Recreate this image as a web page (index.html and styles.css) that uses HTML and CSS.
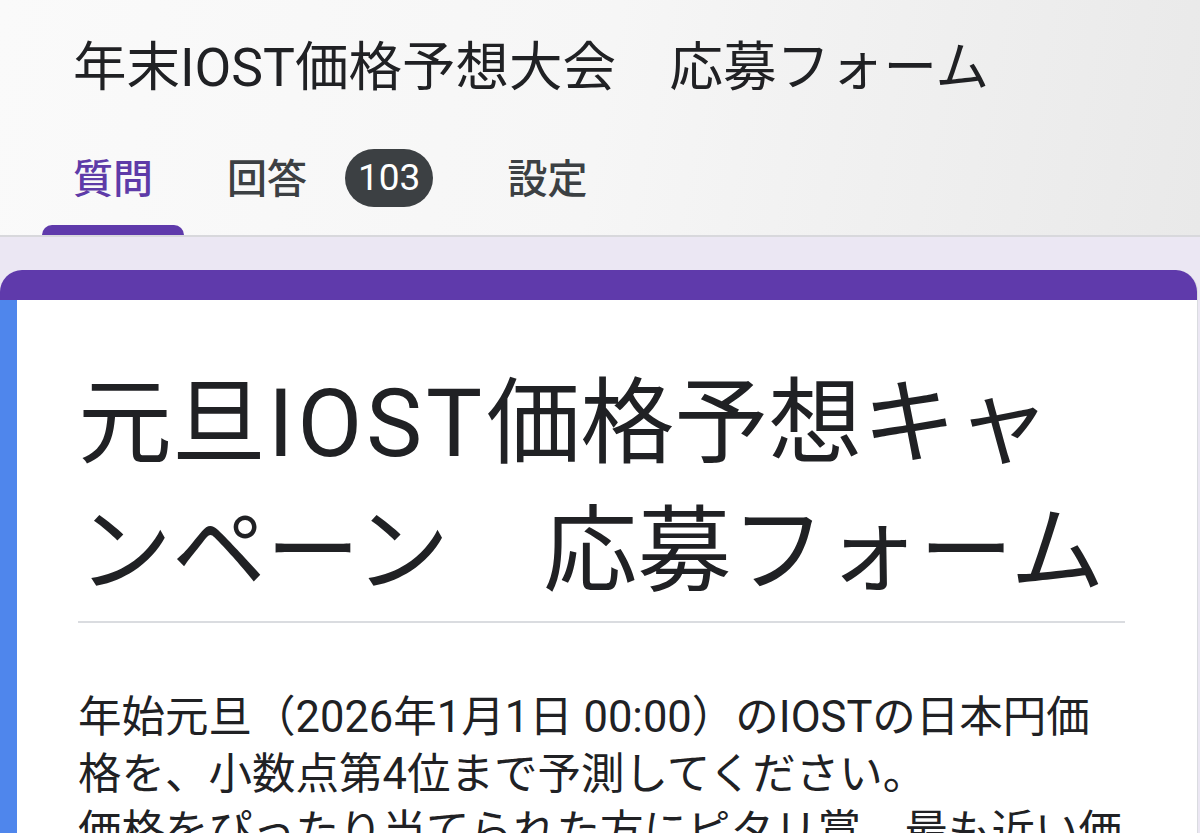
FILE: index.html
```html
<!DOCTYPE html>
<html lang="ja">
<head>
    <meta charset="UTF-8">
    <meta name="viewport" content="width=device-width, initial-scale=1.0">
    <title>年末IOST価格予想大会　応募フォーム</title>
    <link rel="stylesheet" href="styles.css">
</head>
<body>
    <header class="top">
        <h1 class="form-name">年末IOST価格予想大会　応募フォーム</h1>
        <nav class="tabs">
            <a class="tab active" href="#">質問</a>
            <a class="tab" href="#">回答<span class="count">103</span></a>
            <a class="tab" href="#">設定</a>
        </nav>
    </header>

    <main class="page">
        <section class="card">
            <div class="card-band"></div>
            <div class="card-body">
                <h2 class="card-title">元旦<span class="latin">IOST</span>価格予想キャンペーン　応募フォーム</h2>
                <p class="card-desc">年始元旦（2026年1月1日 00:00）のIOSTの日本円価格を、小数点第4位まで予測してください。<br>価格をぴったり当てられた方にピタリ賞、最も近い価格を予想された方に賞品をお送りします。</p>
            </div>
        </section>
    </main>
</body>
</html>
```

FILE: styles.css
```css
body {
    margin: 0;
    background: #ebe7f3;
    font-family: Roboto, "Noto Sans CJK JP", sans-serif;
    color: #202124;
    height: 833px;
    overflow: hidden;
}

.top {
    height: 235px;
    background: linear-gradient(100deg, #fafafa 0%, #f6f6f6 50%, #e9e9e9 100%);
    border-bottom: 2px solid #d8d8dc;
    display: flex;
    flex-direction: column;
}

.form-name {
    margin: 0;
    padding: 36px 0 0 73px;
    font-size: 53.5px;
    font-weight: 400;
    line-height: 64px;
    white-space: nowrap;
}

.tabs {
    display: flex;
    gap: 12px;
    margin-top: auto;
    padding-left: 42px;
}

.tab {
    display: flex;
    align-items: center;
    height: 92px;
    padding: 0 31px 26px;
    color: #3c4043;
    font-size: 40px;
    font-weight: 500;
    text-decoration: none;
    position: relative;
    box-sizing: border-box;
}

.tab.active {
    color: #5e3ba8;
}

.tab.active::after {
    content: "";
    position: absolute;
    left: 0;
    right: 0;
    bottom: 0;
    height: 10px;
    background: #5f3aab;
    border-radius: 10px 10px 0 0;
}

.count {
    margin-left: 38px;
    height: 58px;
    padding: 0 13px;
    border-radius: 29px;
    background: #3c4043;
    color: #fff;
    font-family: Roboto, sans-serif;
    font-size: 37px;
    font-weight: 400;
    line-height: 58px;
    transform: translateY(2px);
}

.page {
    padding: 33px 2px 0 0;
}

.card {
    background: #fff;
    border-right: 1px solid #dadce0;
    border-radius: 22px 22px 0 0;
    overflow: hidden;
}

.card-band {
    height: 30px;
    background: #5f3aab;
}

.card-body {
    border-left: 17px solid #4f86ec;
    padding: 60px 72px 0 61px;
}

.card-title {
    margin: 0;
    padding-bottom: 5px;
    border-bottom: 2px solid #dadce0;
    font-size: 94px;
    font-weight: 400;
    line-height: 128px;
}

.card-title .latin {
    letter-spacing: 4px;
    margin-left: 2px;
}

.card-desc {
    margin: 66px -6px 0 0;
    font-size: 43.5px;
    line-height: 57px;
}
```
